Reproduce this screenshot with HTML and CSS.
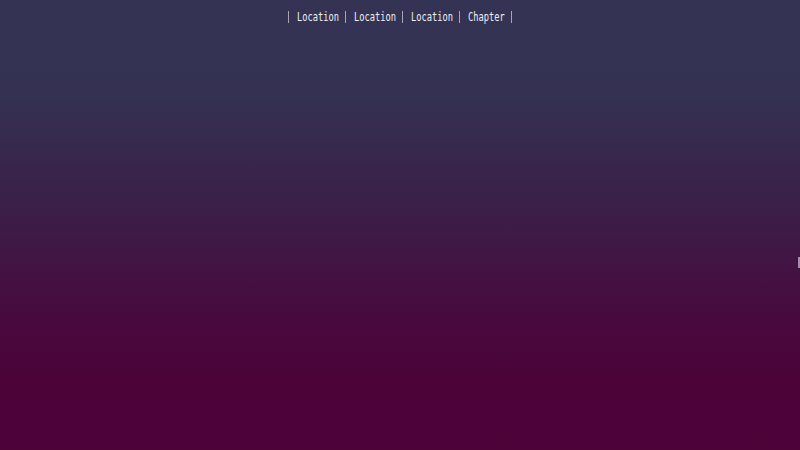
FILE: index.html
```html
<!DOCTYPE html>
<html>
<head>
<meta charset="utf-8">
<link rel="stylesheet" href="styles.css">
</head>
<body>
<div class="stage">
  <nav class="crumbs">
    <span class="sep"></span>
    <span class="item">Location</span>
    <span class="sep"></span>
    <span class="item">Location</span>
    <span class="sep"></span>
    <span class="item">Location</span>
    <span class="sep"></span>
    <span class="item item-short">Chapter</span>
    <span class="sep"></span>
  </nav>
  <div class="edge-tab"></div>
</div>
</body>
</html>
```
FILE: styles.css
```css
html, body {
  margin: 0;
  padding: 0;
  width: 800px;
  height: 450px;
  overflow: hidden;
}

.stage {
  position: relative;
  width: 800px;
  height: 450px;
  background: linear-gradient(to bottom, #353353 0%, #343253 20%, #3b2049 45%, #470a3e 70%, #4c0338 85%, #4d0238 100%);
}

.crumbs {
  display: flex;
  justify-content: center;
  align-items: center;
  gap: 8px;
  padding-top: 10px;
  height: 13px;
}

.sep {
  width: 1px;
  height: 12px;
  background: #a8a6b6;
}

.item {
  display: inline-block;
  width: 40px;
  padding-top: 2px;
  font-family: "DejaVu Sans Mono", monospace;
  font-size: 11.5px;
  line-height: 13px;
  color: #eeeef4;
  white-space: nowrap;
  transform: scaleX(0.76);
  transform-origin: left center;
}

.item-short {
  width: 35px;
}

.edge-tab {
  position: absolute;
  right: 0;
  top: 257px;
  width: 2px;
  height: 11px;
  background: #a88cae;
}
```
